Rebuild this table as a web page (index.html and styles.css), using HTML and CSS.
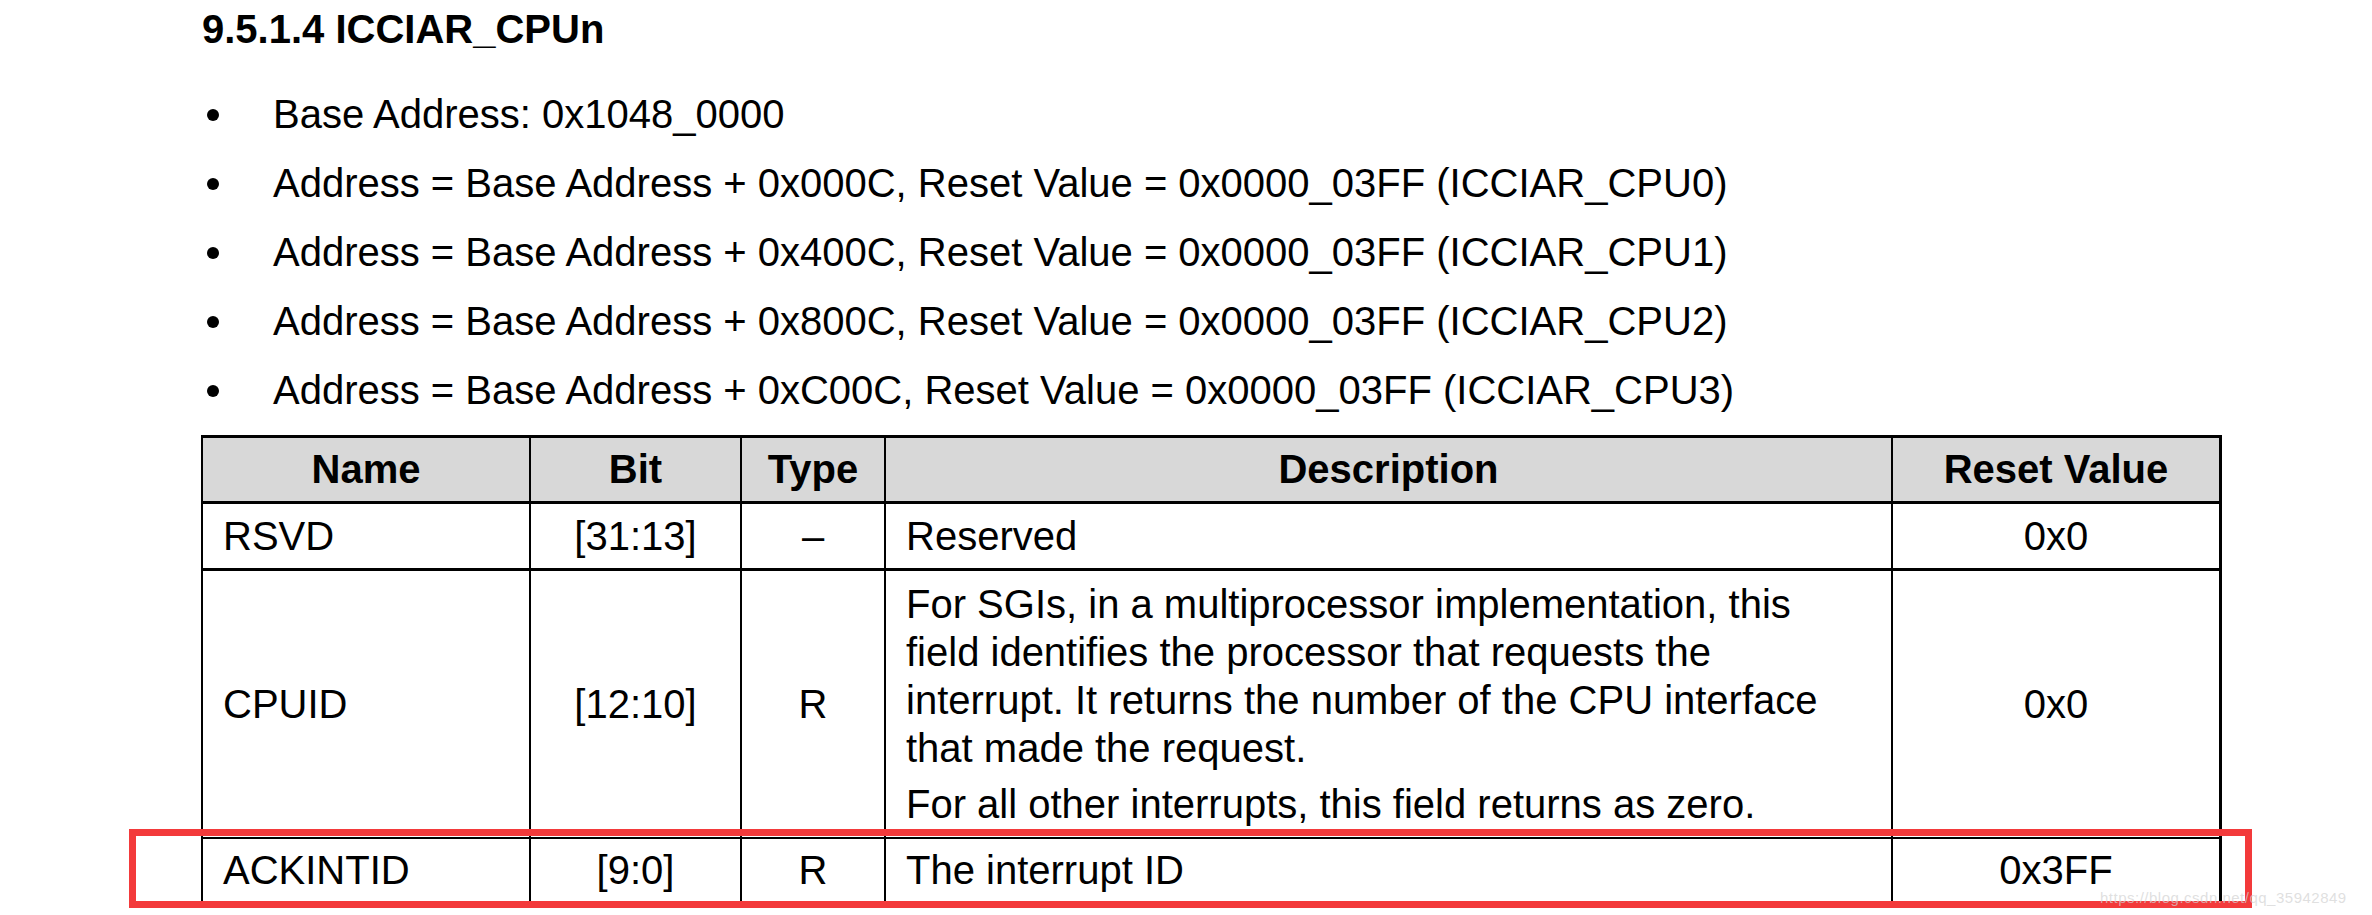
FILE: index.html
```html
<!DOCTYPE html>
<html>
<head>
<meta charset="utf-8">
<link rel="stylesheet" href="styles.css">
</head>
<body>
<div class="page">
  <h1 class="title">9.5.1.4 ICCIAR_CPUn</h1>
  <ul class="bullets">
    <li><span class="dot"></span><span>Base Address: 0x1048_0000</span></li>
    <li><span class="dot"></span><span>Address = Base Address + 0x000C, Reset Value = 0x0000_03FF (ICCIAR_CPU0)</span></li>
    <li><span class="dot"></span><span>Address = Base Address + 0x400C, Reset Value = 0x0000_03FF (ICCIAR_CPU1)</span></li>
    <li><span class="dot"></span><span>Address = Base Address + 0x800C, Reset Value = 0x0000_03FF (ICCIAR_CPU2)</span></li>
    <li><span class="dot"></span><span>Address = Base Address + 0xC00C, Reset Value = 0x0000_03FF (ICCIAR_CPU3)</span></li>
  </ul>
  <div class="reg">
    <div class="cell head">Name</div>
    <div class="cell head">Bit</div>
    <div class="cell head">Type</div>
    <div class="cell head">Description</div>
    <div class="cell head last">Reset Value</div>

    <div class="cell r1">RSVD</div>
    <div class="cell r1 c">[31:13]</div>
    <div class="cell r1 c">–</div>
    <div class="cell r1">Reserved</div>
    <div class="cell r1 c last">0x0</div>

    <div class="cell r2">CPUID</div>
    <div class="cell r2 c">[12:10]</div>
    <div class="cell r2 c">R</div>
    <div class="cell r2 desc">
      <p>For SGIs, in a multiprocessor implementation, this<br>field identifies the processor that requests the<br>interrupt. It returns the number of the CPU interface<br>that made the request.</p>
      <p>For all other interrupts, this field returns as zero.</p>
    </div>
    <div class="cell r2 c last">0x0</div>

    <div class="cell r3">ACKINTID</div>
    <div class="cell r3 c">[9:0]</div>
    <div class="cell r3 c">R</div>
    <div class="cell r3">The interrupt ID</div>
    <div class="cell r3 c last">0x3FF</div>
  </div>
  <div class="highlight"></div>
  <div class="watermark">https://blog.csdn.net/qq_35942849</div>
</div>
</body>
</html>
```

FILE: styles.css
```css
html, body {
  margin: 0;
  padding: 0;
  background: #ffffff;
}
.page {
  position: relative;
  width: 2372px;
  height: 915px;
  overflow: hidden;
  font-family: "Liberation Sans", Arial, sans-serif;
  color: #000;
}
.title {
  margin: 5px 0 0 0;
  padding-left: 202px;
  font-size: 40px;
  line-height: 48px;
  font-weight: bold;
}
.bullets {
  list-style: none;
  margin: 27px 0 0 0;
  padding: 0 0 0 207px;
}
.bullets li {
  display: flex;
  align-items: center;
  font-size: 40px;
  line-height: 69px;
  height: 69px;
}
.dot {
  width: 12px;
  height: 12px;
  border-radius: 50%;
  background: #000;
  margin-right: 54px;
  flex: none;
}
.reg {
  margin: 10px 0 0 201px;
  width: 2021px;
  box-sizing: border-box;
  display: grid;
  grid-template-columns: 328px 211px 144px 1007px 329px;
  border-left: 2px solid #000;
  border-top: 3px solid #000;
  font-size: 40px;
  line-height: 48px;
}
.cell {
  box-sizing: border-box;
  border-right: 2px solid #000;
  border-bottom: 2px solid #000;
  padding: 7px 20px;
  display: flex;
  flex-direction: column;
  justify-content: center;
}
.cell.last {
  border-right-width: 3px;
}
.cell.c {
  align-items: center;
  text-align: center;
}
.head {
  background: #d8d8d8;
  font-weight: bold;
  text-align: center;
  align-items: center;
  padding: 7px 10px 8px;
  border-bottom-width: 3px;
}
.r1 {
  padding-top: 8px;
  padding-bottom: 8px;
  border-bottom-width: 3px;
}
.r2 {
  padding-top: 9px;
  padding-bottom: 9px;
}
.desc p {
  margin: 0;
  white-space: nowrap;
}
.desc p + p {
  margin-top: 8px;
}
.r3 {
  padding-top: 7px;
  padding-bottom: 7px;
}
.highlight {
  position: absolute;
  left: 129px;
  top: 829px;
  width: 2123px;
  height: 79px;
  box-sizing: border-box;
  border: 7px solid #f33a3b;
}
.watermark {
  position: absolute;
  left: 2100px;
  top: 889px;
  font-family: "Liberation Sans", sans-serif;
  font-size: 15px;
  line-height: 18px;
  letter-spacing: 0.5px;
  color: rgba(210, 210, 210, 0.7);
  white-space: nowrap;
}
```
